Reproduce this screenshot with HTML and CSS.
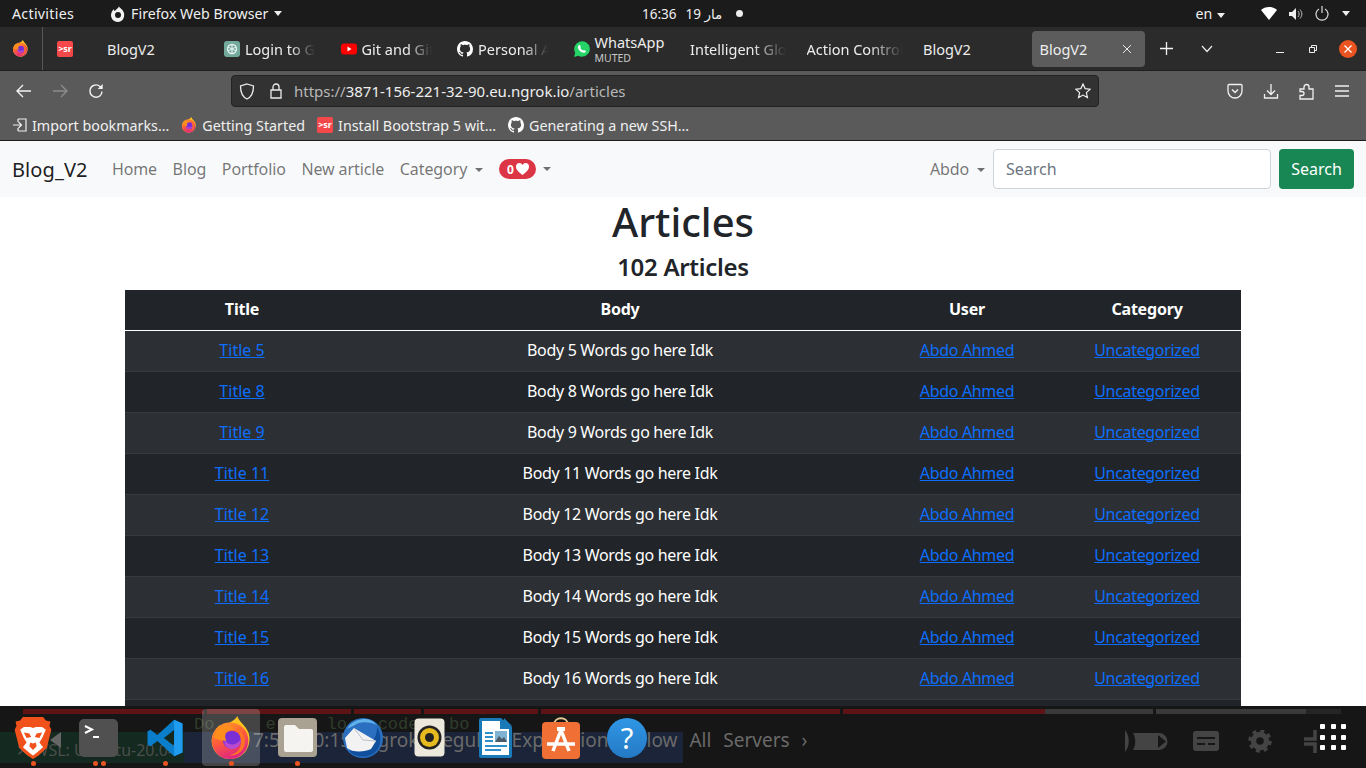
FILE: index.html
```html
<!DOCTYPE html>
<html lang="en">
<head>
    <meta charset="UTF-8">
    <meta name="viewport" content="width=device-width, initial-scale=1.0">
    <title>BlogV2</title>
    <link rel="stylesheet" href="styles.css">
</head>
<body>
    <svg class="defs" width="0" height="0">
        <defs>
            <linearGradient id="fxBody" x1="0" y1="0" x2="0.4" y2="1">
                <stop offset="0" stop-color="#ffa51f"/>
                <stop offset="0.55" stop-color="#ff5a3c"/>
                <stop offset="1" stop-color="#e0287f"/>
            </linearGradient>
            <symbol id="firefox" viewBox="0 0 48 48">
                <path fill="#ffc31f" d="M31 0c1 6 9 10 12 18 4 11-2 28-19 29C11 47 2 37 3 25c1-7 5-12 9-15 0 2 1 4 2 5 3-7 13-8 17-15z"/>
                <circle cx="23" cy="27" r="20" fill="url(#fxBody)"/>
                <circle cx="25" cy="26" r="10" fill="#7a2fd6"/>
                <path fill="#b84bd0" d="M17 26c3 6 12 8 18-1 0 6-4 11-10 11s-9-5-8-10z"/>
                <path fill="#ff8f1c" d="M5 24c2-9 9-14 16-13 5 1 8 4 8 4-6-1-10 1-11 5-1 3 0 5 1 7-6 0-11-2-14-3z"/>
                <path fill="#ff7424" d="M30 15c7 2 10 8 9 15-1 8-8 14-17 13 8-2 13-7 13-14 0-6-2-10-5-14z"/>
            </symbol>
            <symbol id="octocat" viewBox="0 0 16 16">
                <path fill="#fbfbfb" d="M8 0C3.58 0 0 3.58 0 8c0 3.54 2.29 6.53 5.47 7.59.4.07.55-.17.55-.38 0-.19-.01-.82-.01-1.49-2.01.37-2.53-.49-2.69-.94-.09-.23-.48-.94-.82-1.13-.28-.15-.68-.52-.01-.53.63-.01 1.08.58 1.23.82.72 1.21 1.87.87 2.33.66.07-.52.28-.87.51-1.07-1.78-.2-3.64-.89-3.64-3.95 0-.87.31-1.59.82-2.15-.08-.2-.36-1.02.08-2.12 0 0 .67-.21 2.2.82.64-.18 1.32-.27 2-.27.68 0 1.36.09 2 .27 1.53-1.04 2.2-.82 2.2-.82.44 1.1.16 1.92.08 2.12.51.56.82 1.27.82 2.15 0 3.07-1.87 3.75-3.65 3.95.29.25.54.73.54 1.48 0 1.07-.01 1.93-.01 2.2 0 .21.15.46.55.38A8.013 8.013 0 0016 8c0-4.42-3.58-8-8-8z"/>
            </symbol>
        </defs>
    </svg>

    <div class="topbar">
        <div class="topbar-left">
            <span class="activities">Activities</span>
            <span class="app-menu">
                <svg width="16" height="16" viewBox="0 0 16 16"><path fill="#f2f2f2" d="M9 0c0 2 4 3 5 7 1 5-2 9-6 9-5 0-7-4-7-7 0-3 2-5 3-6 0 1 0 2 1 2 1-2 4-3 4-5zM8 6a3 3 0 100 6 3 3 0 000-6z"/></svg>
                Firefox Web Browser <i class="caret-light"></i>
            </span>
        </div>
        <div class="clock">
            <span>16:36</span><span>19 مار</span><i class="clock-dot"></i>
        </div>
        <div class="tray">
            <span class="lang">en <i class="caret-light"></i></span>
            <svg class="wifi" width="16" height="13" viewBox="0 0 16 13"><path fill="#fff" d="M0 3c4-4 12-4 16 0L8 13z"/></svg>
            <svg width="14" height="14" viewBox="0 0 14 14"><path fill="#eee" d="M0 5h3l4-4v12L3 9H0z"/><path fill="none" stroke="#bbb" d="M9 4c1.500 2 1.500 4 0 6M11 2.500c2.500 3 2.500 6 0 9"/></svg>
            <svg width="14" height="15" viewBox="0 0 14 15"><path fill="none" stroke="#ddd" stroke-width="1.200" d="M4 3a6 6 0 106 0M7 0v7"/></svg>
            <i class="caret-light"></i>
        </div>
    </div>

    <div class="tabbar">
        <div class="fx-button"><svg width="17" height="17"><use href="#firefox"/></svg></div>
        <div class="tab tab-first">
            <span class="sr-icon">&gt;sr</span>
            <span class="tab-name">BlogV2</span>
        </div>
        <div class="tab">
            <svg class="tab-icon" width="16" height="16" viewBox="0 0 16 16"><rect width="16" height="16" rx="3" fill="#74aa9c"/><circle cx="8" cy="8" r="4.500" fill="none" stroke="#e6f2ef" stroke-width="1.300"/><path d="M8 3.500v9M4 6l8 4M12 6l-8 4" stroke="#e6f2ef"/></svg>
            <span class="tab-name fade">Login to GitHub</span>
        </div>
        <div class="tab">
            <svg class="tab-icon" width="16" height="16" viewBox="0 0 16 16"><rect y="2.500" width="16" height="11" rx="3" fill="#f00"/><path fill="#fff" d="M6.500 5.500v5l4-2.500z"/></svg>
            <span class="tab-name fade">Git and GitHub</span>
        </div>
        <div class="tab">
            <svg class="tab-icon" width="16" height="16"><use href="#octocat"/></svg>
            <span class="tab-name fade">Personal Access</span>
        </div>
        <div class="tab">
            <svg class="tab-icon" width="16" height="16" viewBox="0 0 16 16"><path fill="#25d366" d="M0 16l1.200-4.200A7.800 7.800 0 118 15.800a7.800 7.800 0 01-3.800-1z"/><path fill="#fff" d="M5.300 4c.5 0 .7.100.9.600l.6 1.300c.1.300 0 .5-.5 1.100.6 1.200 1.500 2 2.700 2.600.5-.6.700-.8 1-.7l1.500.8c.4.200.4.500.2 1.100-.3.800-1.300 1.200-2.200 1C6.700 11.300 4.700 9.300 4 7c-.3-1.200.3-2.800 1.300-3z"/></svg>
            <span class="tab-stack"><span>WhatsApp</span><small>MUTED</small></span>
        </div>
        <div class="tab"><span class="tab-name fade fade-wide">Intelligent Global</span></div>
        <div class="tab"><span class="tab-name fade fade-wide">Action Controller</span></div>
        <div class="tab"><span class="tab-name">BlogV2</span></div>
        <div class="tab tab-active">
            <span class="tab-name">BlogV2</span>
            <svg class="tab-close" width="10" height="10" viewBox="0 0 10 10"><path stroke="#e8e8e8" d="M1 1l8 8M9 1l-8 8"/></svg>
        </div>
        <svg class="new-tab" width="13" height="13" viewBox="0 0 13 13"><path stroke="#f2f2f2" stroke-width="1.300" d="M6.500 0v13M0 6.500h13"/></svg>
        <svg class="tab-list" width="12" height="8" viewBox="0 0 12 8"><path fill="none" stroke="#eee" stroke-width="1.200" d="M1 1l5 5.500L11 1"/></svg>
        <div class="window-btns">
            <svg width="8" height="8" viewBox="0 0 8 8"><path stroke="#eee" d="M0 7.500h8"/></svg>
            <svg width="8" height="8" viewBox="0 0 8 8"><path fill="none" stroke="#eee" d="M.5 2.500h5v5h-5zM2.500 2V.5h5v5H6"/></svg>
            <span class="close-btn">
                <svg width="8" height="8" viewBox="0 0 8 8"><path stroke="#fff" stroke-width="1.300" d="M.5.500l7 7M7.500.500l-7 7"/></svg>
            </span>
        </div>
    </div>

    <div class="toolbar">
        <div class="nav-btns">
            <svg width="16" height="14" viewBox="0 0 16 14"><path fill="none" stroke="#f2f2f2" stroke-width="1.400" d="M15 7H1.500M7 1L1 7l6 6"/></svg>
            <svg width="16" height="14" viewBox="0 0 16 14"><path fill="none" stroke="#8c8c8c" stroke-width="1.400" d="M1 7h13.500M9 1l6 6-6 6"/></svg>
            <svg width="16" height="16" viewBox="0 0 16 16"><path fill="none" stroke="#f2f2f2" stroke-width="1.400" d="M14 8.500A6 6 0 112 8a6 6 0 0110-4.500l2 1.500"/><path fill="#f2f2f2" d="M14.700 1v5h-5z"/></svg>
        </div>
        <div class="urlbar">
            <svg width="16" height="17" viewBox="0 0 16 17"><path fill="none" stroke="#ececec" stroke-width="1.300" d="M8 1l6.500 2c0 6-1 10.500-6.500 13C2.500 13.500 1.500 9 1.500 3z"/></svg>
            <svg class="lock" width="14" height="16" viewBox="0 0 14 16"><path fill="none" stroke="#ececec" stroke-width="1.300" d="M2 7h10v8H2zM4 7V4a3 3 0 016 0v3"/></svg>
            <span class="url"><span class="url-dim">https://</span>3871-156-221-32-90.eu.ngrok.io<span class="url-dim">/articles</span></span>
            <svg class="star" width="16" height="16" viewBox="0 0 16 16"><path fill="none" stroke="#f0f0f0" stroke-width="1.200" d="M8 1l2.100 4.600 5 .6-3.700 3.400 1 5L8 12.100l-4.400 2.500 1-5L.9 6.200l5-.6z"/></svg>
        </div>
        <div class="tool-btns">
            <svg width="16" height="16" viewBox="0 0 16 16"><path fill="none" stroke="#f0f0f0" stroke-width="1.300" d="M2 1.500h12a1 1 0 011 1V8a7 7 0 01-14 0V2.500a1 1 0 011-1z"/><path fill="none" stroke="#f0f0f0" stroke-width="1.500" d="M5 6.500l3 3 3-3"/></svg>
            <svg width="16" height="16" viewBox="0 0 16 16"><path fill="none" stroke="#f0f0f0" stroke-width="1.300" d="M8 1v10M4 7.500L8 11.500l4-4M1.500 11v4h13v-4"/></svg>
            <svg width="16" height="17" viewBox="0 0 16 17"><path fill="none" stroke="#f0f0f0" stroke-width="1.300" d="M1 6h4V4a2.500 2.500 0 015 0v2h4v10H1v-3.500h2a2 2 0 000-4H1z"/></svg>
            <svg width="14" height="12" viewBox="0 0 14 12"><path stroke="#f0f0f0" stroke-width="1.300" d="M0 1h14M0 6h14M0 11h14"/></svg>
        </div>
    </div>

    <div class="bookmarks">
        <span class="bookmark">
            <svg width="14" height="14" viewBox="0 0 14 14"><path fill="none" stroke="#eee" stroke-width="1.200" d="M5 1h8v12H5M5 4V1M5 13v-3M0 7h8M5.500 4L8.500 7l-3 3"/></svg>
            Import bookmarks…
        </span>
        <span class="bookmark"><svg width="16" height="16"><use href="#firefox"/></svg>Getting Started</span>
        <span class="bookmark"><span class="sr-icon">&gt;sr</span>Install Bootstrap 5 wit…</span>
        <span class="bookmark"><svg width="16" height="16"><use href="#octocat"/></svg>Generating a new SSH…</span>
    </div>

    <nav class="navbar">
        <a class="brand" href="#">Blog_V2</a>
        <a class="nav-link" href="#">Home</a>
        <a class="nav-link" href="#">Blog</a>
        <a class="nav-link" href="#">Portfolio</a>
        <a class="nav-link" href="#">New article</a>
        <a class="nav-link" href="#">Category <i class="caret"></i></a>
        <a class="nav-link likes" href="#">
            <span class="badge">0<svg width="13" height="12" viewBox="0 0 13 12"><path fill="#fff" d="M6.500 12C3 9 0 7 0 3.500 0 1.500 1.500 0 3.300 0 4.700 0 5.900.8 6.500 2 7.100.8 8.300 0 9.700 0 11.500 0 13 1.500 13 3.500 13 7 10 9 6.500 12z"/></svg></span>
            <i class="caret"></i>
        </a>
        <a class="nav-link user-menu" href="#">Abdo <i class="caret"></i></a>
        <form class="search">
            <input type="text" placeholder="Search">
            <button type="button">Search</button>
        </form>
    </nav>

    <main class="content">
        <h1>Articles</h1>
        <h3>102 Articles</h3>
        <table class="articles">
            <colgroup>
                <col class="col-title">
                <col class="col-body">
                <col class="col-user">
                <col class="col-cat">
            </colgroup>
            <thead>
                <tr><th>Title</th><th>Body</th><th>User</th><th>Category</th></tr>
            </thead>
            <tbody>
                <tr><td><a href="#">Title 5</a></td><td>Body 5 Words go here Idk</td><td><a href="#">Abdo Ahmed</a></td><td><a href="#">Uncategorized</a></td></tr>
                <tr><td><a href="#">Title 8</a></td><td>Body 8 Words go here Idk</td><td><a href="#">Abdo Ahmed</a></td><td><a href="#">Uncategorized</a></td></tr>
                <tr><td><a href="#">Title 9</a></td><td>Body 9 Words go here Idk</td><td><a href="#">Abdo Ahmed</a></td><td><a href="#">Uncategorized</a></td></tr>
                <tr><td><a href="#">Title 11</a></td><td>Body 11 Words go here Idk</td><td><a href="#">Abdo Ahmed</a></td><td><a href="#">Uncategorized</a></td></tr>
                <tr><td><a href="#">Title 12</a></td><td>Body 12 Words go here Idk</td><td><a href="#">Abdo Ahmed</a></td><td><a href="#">Uncategorized</a></td></tr>
                <tr><td><a href="#">Title 13</a></td><td>Body 13 Words go here Idk</td><td><a href="#">Abdo Ahmed</a></td><td><a href="#">Uncategorized</a></td></tr>
                <tr><td><a href="#">Title 14</a></td><td>Body 14 Words go here Idk</td><td><a href="#">Abdo Ahmed</a></td><td><a href="#">Uncategorized</a></td></tr>
                <tr><td><a href="#">Title 15</a></td><td>Body 15 Words go here Idk</td><td><a href="#">Abdo Ahmed</a></td><td><a href="#">Uncategorized</a></td></tr>
                <tr><td><a href="#">Title 16</a></td><td>Body 16 Words go here Idk</td><td><a href="#">Abdo Ahmed</a></td><td><a href="#">Uncategorized</a></td></tr>
                <tr><td><a href="#">Title 17</a></td><td>Body 17 Words go here Idk</td><td><a href="#">Abdo Ahmed</a></td><td><a href="#">Uncategorized</a></td></tr>
            </tbody>
        </table>
    </main>

    <!-- dock is see-through in the shot, the window behind it shows up faintly -->
    <div class="dock">
        <div class="ghost">
            <div class="ghost-bars">
                <i class="bar-a"></i><i class="bar-b"></i><i class="bar-c"></i><i class="bar-d"></i><i class="bar-e"></i><i class="bar-f"></i><i class="bar-g"></i><i class="bar-h"></i><i class="bar-i"></i>
            </div>
            <span class="ghost-green"></span>
            <span class="ghost-blue"></span>
            <span class="ghost-wsl">✕ WSL: Ubuntu-20.04</span>
            <span class="ghost-code">Do     e     lo   code   bo</span>
            <span class="ghost-text">7:50 10:15 Ngrok Regular Expressions Allow All Servers ›</span>
            <i class="ghost-arrow"></i>
            <svg class="ghost-icons" width="225" height="24" viewBox="0 0 225 24">
                <path fill="#444" d="M4 0c5 6 5 16 0 22zM12 3h26a8.500 8.500 0 010 17H12c3-5 3-12 0-17z"/>
                <path fill="#161616" d="M37 5v13l8-6.500z"/>
                <rect x="72" y="1" width="26" height="20" rx="3" fill="#444"/>
                <path stroke="#161616" stroke-width="2" d="M76 8h18M76 14h8M87 14h7"/>
                <circle cx="139" cy="11" r="6.500" fill="none" stroke="#444" stroke-width="5.500"/>
                <circle cx="139" cy="11" r="10" fill="none" stroke="#444" stroke-width="3.500" stroke-dasharray="3.900 3.950"/>
                <path fill="none" stroke="#444" stroke-width="3.500" d="M183 9h11V0M183 14h11v9"/>
            </svg>
        </div>
        <div class="dock-apps">
            <div class="dock-item">
                <svg width="38" height="44" viewBox="0 0 40 48">
                    <path fill="#f1511b" d="M9 1h22l3 4 5 1-1 5 2 4-5 20-9 8-6 4-6-4-9-8L0 15l2-4-1-5 5-1z"/>
                    <path fill="#fff" d="M10 12h7l3 1 3-1h7l4 3-4 9-3 5 4 5-8 7-3 2-3-2-8-7 4-5-3-5-4-9z"/>
                    <path fill="#f1511b" d="M10 18l6 1 2 4-5 1zM30 18l-6 1-2 4 5 1zM17 29l3 1 3-1 1 4-4 4-4-4z"/>
                </svg>
                <span class="run-dots"><i></i></span>
            </div>
            <div class="dock-item">
                <svg width="40" height="38" viewBox="0 0 40 38">
                    <rect width="39" height="38" rx="5" fill="#505050"/>
                    <path fill="none" stroke="#fff" stroke-width="2" d="M6 7l7 3.500L6 14M14 18h6"/>
                </svg>
                <span class="run-dots"><i></i><i></i></span>
            </div>
            <div class="dock-item">
                <svg width="38" height="40" viewBox="0 0 100 100">
                    <path fill="#0a7ecb" fill-rule="evenodd" d="M74 2l22 10v76L74 98 30 58 12 72l-8-4V32l8-4 18 14zM74 29L47 50l27 21z"/>
                    <path fill="#1f9cf0" d="M74 2l22 10v76L74 98z"/>
                </svg>
                <span class="run-dots"><i></i></span>
            </div>
            <div class="dock-item dock-active">
                <svg width="44" height="44"><use href="#firefox"/></svg>
                <span class="run-dots"><i></i></span>
            </div>
            <div class="dock-item">
                <svg width="39" height="39" viewBox="0 0 39 39">
                    <rect width="39" height="39" rx="4" fill="#a9a292"/>
                    <path fill="#f6f4f1" d="M6 9a2 2 0 012-2h9l4 4h12a2 2 0 012 2v19a2 2 0 01-2 2H8a2 2 0 01-2-2z"/>
                </svg>
                <span class="run-dots"><i></i></span>
            </div>
            <div class="dock-item">
                <svg width="44" height="42" viewBox="0 0 44 42">
                    <circle cx="22" cy="21" r="20" fill="#2a6fc0"/>
                    <path fill="#0f4f9e" d="M8 34c8 8 24 8 30-4 2-6 2-14-2-20 0 12-6 22-28 24z"/>
                    <path fill="#62b2ea" d="M6 12C12 1 28-2 36 8c-10-4-18-3-22 0z"/>
                    <path fill="#f2f2f2" d="M4 21l9-10 22 13-5 8c-6 3-18 4-24-1z"/>
                    <path fill="none" stroke="#b9c2cc" d="M13 11l9 12 13 1"/>
                </svg>
            </div>
            <div class="dock-item">
                <svg width="31" height="39" viewBox="0 0 31 39">
                    <rect x=".5" y=".5" width="30" height="38" rx="4" fill="#ece8dc"/>
                    <circle cx="15.500" cy="19.500" r="12" fill="#222"/>
                    <circle cx="15.500" cy="19.500" r="9.500" fill="#e7bb1f"/>
                    <circle cx="15.500" cy="19.500" r="4.500" fill="#222"/>
                </svg>
            </div>
            <div class="dock-item">
                <svg width="33" height="40" viewBox="0 0 33 40">
                    <path fill="#1a7ab8" d="M2 0h20l11 9v29a2 2 0 01-2 2H2a2 2 0 01-2-2V2a2 2 0 012-2z"/>
                    <path fill="#fff" d="M3 3h18v8h9v26H3z"/>
                    <path fill="#1a7ab8" d="M25 0l8 8h-8z"/>
                    <path stroke="#2f8fca" stroke-width="2" d="M6 15h8M6 19h8M6 23h8M6 28h22M6 32h16"/>
                    <rect x="16" y="13" width="12" height="11" fill="#7fb2d0"/>
                    <path fill="#4a5a66" d="M16 24l4-6 3 3 2-2 3 5z"/>
                </svg>
            </div>
            <div class="dock-item">
                <svg width="40" height="44" viewBox="0 0 40 44">
                    <path fill="none" stroke="#e8c896" stroke-width="1.800" d="M13 9c0-9 14-9 14 0"/>
                    <rect x="1" y="6" width="38" height="37" rx="4" fill="#ef6f34"/>
                    <path fill="none" stroke="#fff" stroke-width="3.500" d="M20 14l-8 21M20 14l8 21M6 28h28"/>
                    <path fill="#fff" d="M16 11h8v4h-8z"/>
                </svg>
            </div>
            <div class="dock-item">
                <span class="help-icon">?</span>
            </div>
        </div>
        <div class="grid-dots">
            <i></i><i></i><i></i><i></i><i></i><i></i><i></i><i></i><i></i>
        </div>
    </div>
</body>
</html>
```

FILE: styles.css
```css
* {
    box-sizing: border-box;
}

html, body {
    height: 100%;
}

body {
    margin: 0;
    width: 1366px;
    height: 768px;
    overflow: hidden;
    position: relative;
    font-family: "Noto Sans", "DejaVu Sans", sans-serif;
    background: #fff;
    color: #212529;
}

.defs {
    position: absolute;
}

/* gnome top bar */
.topbar {
    height: 27px;
    background: #1b1b1b;
    color: #efefef;
    font-size: 14.200px;
    display: flex;
    align-items: center;
    justify-content: space-between;
    position: relative;
    padding: 0 16px 0 12px;
}

.topbar-left {
    display: flex;
    align-items: center;
    gap: 36px;
}

.activities {
    letter-spacing: .3px;
}

.app-menu {
    display: flex;
    align-items: center;
    gap: 5px;
}

.caret-light {
    display: inline-block;
    border-top: 5px solid #eee;
    border-left: 4.500px solid transparent;
    border-right: 4.500px solid transparent;
    vertical-align: middle;
    margin-left: 1px;
}

.clock {
    position: absolute;
    left: 642px;
    top: 0;
    height: 27px;
    display: flex;
    align-items: center;
    gap: 9px;
    font-size: 13.500px;
}

.clock-dot {
    width: 7px;
    height: 7px;
    border-radius: 50%;
    background: #eee;
    margin-left: 5px;
}

.tray {
    display: flex;
    align-items: center;
    gap: 12px;
}

.lang {
    margin-right: 24px;
}

/* tabs */
.tabbar {
    height: 44px;
    background: #2b2b2b;
    color: #ededed;
    font-size: 14.500px;
    display: flex;
    align-items: center;
    border-bottom: 1px solid #1f1f1f;
    position: relative;
}

.fx-button {
    width: 43px;
    height: 43px;
    border-right: 1px solid #575757;
    display: flex;
    align-items: center;
    padding-left: 12px;
    margin-right: 6px;
}

.tab {
    width: 116.500px;
    height: 36px;
    display: flex;
    align-items: center;
    padding: 1px 0 0 8px;
    gap: 5px;
    flex-shrink: 0;
    border-radius: 4px;
}

.tab-first {
    width: 167px;
    gap: 34px;
}

.tab-name {
    white-space: nowrap;
    overflow: hidden;
}

.fade {
    width: 70px;
    -webkit-mask-image: linear-gradient(to right, #000 65%, transparent);
    mask-image: linear-gradient(to right, #000 65%, transparent);
}

.fade-wide {
    width: 96px;
}

.tab-stack {
    display: flex;
    flex-direction: column;
    line-height: 16px;
    padding-top: 1px;
}

.tab-stack small {
    font-size: 10.500px;
    color: #c8c8c8;
}

.tab-active {
    width: 113px;
    background: #5c5c5c;
    justify-content: space-between;
    padding-right: 13px;
}

.sr-icon {
    display: inline-block;
    width: 16px;
    height: 16px;
    border-radius: 2px;
    background: #f5484a;
    color: #fff;
    font-size: 9px;
    line-height: 16px;
    text-align: center;
    font-weight: 700;
    flex-shrink: 0;
    overflow: hidden;
}

.new-tab {
    margin-left: 15px;
}

.tab-list {
    margin-left: 28px;
}

.window-btns {
    display: flex;
    align-items: center;
    margin-left: auto;
    gap: 25px;
    padding-right: 9px;
}

.close-btn {
    width: 18px;
    height: 18px;
    border-radius: 50%;
    background: #e95420;
    display: flex;
    align-items: center;
    justify-content: center;
    margin-left: -3px;
}

/* toolbar */
.toolbar {
    height: 40px;
    background: #5a5a5a;
    display: flex;
    align-items: center;
    padding: 0 17px 0 16px;
    color: #eee;
}

.nav-btns {
    display: flex;
    align-items: center;
    gap: 20px;
    width: 215px;
}

.urlbar {
    width: 868px;
    height: 32px;
    background: #323232;
    border: 1px solid #232323;
    border-radius: 4px;
    display: flex;
    align-items: center;
    padding: 0 7px;
    gap: 11px;
    font-size: 15px;
}

.lock {
    margin-left: 3px;
}

.url {
    white-space: nowrap;
}

.url-dim {
    color: #b8b8b8;
}

.star {
    margin-left: auto;
}

.tool-btns {
    display: flex;
    align-items: center;
    gap: 20px;
    margin-left: auto;
}

.bookmarks {
    height: 29px;
    background: #5a5a5a;
    color: #f0f0f0;
    font-size: 14.300px;
    display: flex;
    align-items: center;
    padding: 0 12px 1px 13px;
    gap: 12px;
}

.bookmark {
    display: flex;
    align-items: center;
    gap: 5px;
    white-space: nowrap;
}

/* page */
.navbar {
    height: 57px;
    background: #f8f9fa;
    border-top: 1px solid #1c1c1c;
    display: flex;
    align-items: center;
    padding: 0 12px;
}

.brand {
    font-size: 20px;
    color: rgba(0, 0, 0, .9);
    text-decoration: none;
    margin-right: 16.500px;
    letter-spacing: .1px;
}

.nav-link {
    color: rgba(0, 0, 0, .55);
    text-decoration: none;
    font-size: 16px;
    padding: 0 7.800px;
    white-space: nowrap;
    letter-spacing: -.1px;
}

.caret {
    display: inline-block;
    border-top: 4.800px solid;
    border-left: 4.800px solid transparent;
    border-right: 4.800px solid transparent;
    border-bottom: 0;
    vertical-align: 3px;
    margin-left: 4px;
}

.likes {
    display: flex;
    align-items: center;
    gap: 3px;
    margin-left: .5px;
}

.badge {
    background: #dc3545;
    color: #fff;
    border-radius: 10px;
    font-size: 12px;
    font-weight: 700;
    height: 20px;
    width: 37px;
    display: flex;
    align-items: center;
    justify-content: center;
    gap: 2px;
}

.user-menu {
    margin-left: auto;
}

.search {
    display: flex;
    gap: 8px;
}

.search input {
    width: 278px;
    height: 40px;
    border: 1px solid #ced4da;
    border-radius: 4px;
    padding: 6px 12px;
    font: inherit;
    font-size: 16px;
    background: #fff;
}

.search input::placeholder {
    color: #6c757d;
}

.search button {
    width: 75px;
    height: 40px;
    border: none;
    border-radius: 4px;
    background: #198754;
    color: #fff;
    font: inherit;
    font-size: 16px;
}

.content {
    text-align: center;
}

h1 {
    font-size: 40px;
    font-weight: 500;
    line-height: 48px;
    margin: 1px 0 0;
}

h3 {
    font-size: 24px;
    font-weight: 600;
    line-height: 29px;
    letter-spacing: -.3px;
    margin: 6px 0 9px;
}

.articles {
    width: 1116px;
    margin: 0 auto;
    border-collapse: collapse;
    table-layout: fixed;
    background: #212529;
    color: #fff;
    font-size: 16px;
    letter-spacing: -.32px;
}

.col-title { width: 234px; }
.col-body { width: 522px; }
.col-user { width: 172px; }
.col-cat { width: 188px; }

.articles th {
    height: 40px;
    font-weight: 700;
    letter-spacing: -.2px;
    padding-bottom: 2px;
    border-bottom: 1px solid #fff;
}

.articles td {
    height: 41px;
    padding-bottom: 3px;
    border-bottom: 1px solid #373b3e;
}

.articles td:first-child {
    letter-spacing: 0;
}

.articles tbody tr:nth-child(odd) {
    background: #2c3034;
}

.articles a {
    color: #0d6efd;
}

/* dock */
.dock {
    position: absolute;
    left: 0;
    top: 706px;
    width: 1366px;
    height: 62px;
    background: #161616;
    overflow: hidden;
}

.ghost {
    position: absolute;
    inset: 0;
}

.ghost-bars {
    position: absolute;
    left: 23px;
    top: 3px;
    display: flex;
    gap: 3px;
    height: 5px;
}

.ghost-bars i {
    display: block;
    background: #5e1414;
}

.bar-a { width: 181px; }
.bar-b { width: 144px; }
.bar-c { width: 67px; }
.bar-d { width: 114px; }
.bar-e { width: 299px; }
.bar-f { width: 202px; }

.ghost-bars .bar-g {
    width: 108px;
    margin-left: -3px;
    background: #3a3a3a;
}

.ghost-bars .bar-h {
    width: 150px;
    background: #3a3a3a;
}

.ghost-bars .bar-i {
    width: 35px;
    margin-left: -3px;
    background: #252525;
}

.ghost-green {
    position: absolute;
    left: 0;
    top: 26px;
    width: 184px;
    height: 31px;
    background: #14291f;
}

.ghost-blue {
    position: absolute;
    left: 184px;
    top: 26px;
    width: 499px;
    height: 31px;
    background: #1b2438;
}

.ghost-wsl {
    position: absolute;
    left: 16px;
    top: 33px;
    font-size: 16px;
    color: #4a4f4c;
    white-space: nowrap;
}

.ghost-code {
    position: absolute;
    left: 194px;
    top: 9px;
    font-family: "Liberation Mono", monospace;
    font-size: 17px;
    color: #2f3d2a;
    white-space: pre;
}

.ghost-text {
    position: absolute;
    left: 253px;
    top: 21px;
    font-size: 19px;
    color: #6a6a6a;
    white-space: pre;
    word-spacing: 7px;
}

.ghost-arrow {
    position: absolute;
    left: 50px;
    top: 26px;
    border-right: 11px solid #666;
    border-top: 8px solid transparent;
    border-bottom: 8px solid transparent;
}

.ghost-icons {
    position: absolute;
    left: 1121px;
    top: 24px;
}

.dock-apps {
    position: relative;
    display: flex;
    height: 62px;
}

.dock-item {
    width: 66px;
    height: 62px;
    display: flex;
    align-items: center;
    justify-content: center;
    position: relative;
    flex-shrink: 0;
    padding-top: 1px;
}

.dock-active::before {
    content: "";
    position: absolute;
    left: 4px;
    right: 4px;
    top: 3px;
    bottom: 2px;
    border-radius: 4px;
    background: rgba(255, 255, 255, .2);
}

.dock-item svg, .help-icon {
    position: relative;
}

.run-dots {
    position: absolute;
    left: 0;
    right: 0;
    bottom: 2px;
    display: flex;
    justify-content: center;
    gap: 3px;
}

.run-dots i {
    width: 5px;
    height: 5px;
    border-radius: 50%;
    background: #e95420;
}

.help-icon {
    width: 40px;
    height: 40px;
    border-radius: 50%;
    background: linear-gradient(#2f97e6, #2479c4);
    color: #fff;
    font-size: 29px;
    line-height: 40px;
    text-align: center;
}

.grid-dots {
    position: absolute;
    left: 1320px;
    top: 18px;
    display: grid;
    grid-template-columns: repeat(3, 5px);
    grid-auto-rows: 5px;
    gap: 5.500px;
}

.grid-dots i {
    background: #fff;
    border-radius: 1px;
}
```
